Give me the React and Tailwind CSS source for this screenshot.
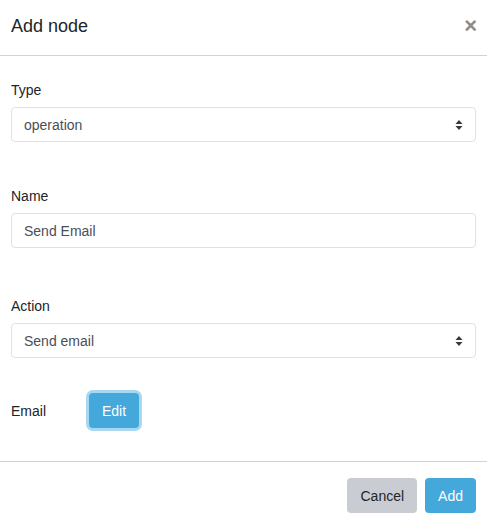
const font = { fontFamily: '"Liberation Sans", Arial, sans-serif' }

function SelectArrows() {
  return (
    <svg width="8" height="12" viewBox="0 0 8 12" className="shrink-0">
      <path d="M4 1 L7.5 5 H0.5 Z" fill="#343a40" />
      <path d="M4 11 L7.5 7 H0.5 Z" fill="#343a40" />
    </svg>
  )
}

function Field({ label, children, className = '' }) {
  return (
    <div className={className}>
      <div className="text-[14px] leading-[21px] text-[#212529] pt-[2px] mb-[6px]">{label}</div>
      {children}
    </div>
  )
}

function SelectBox({ value }) {
  return (
    <div className="h-[35px] border border-[#dee2e6] rounded-[4px] px-[12px] flex items-center justify-between text-[14px] text-[#495057] bg-white">
      <span className="mt-[2px]">{value}</span>
      <SelectArrows />
    </div>
  )
}

export default function App() {
  return (
    <div className="w-[487px] h-[518px] bg-white flex flex-col" style={font}>
      {/* Header */}
      <div className="h-[56px] px-[11px] flex items-center justify-between border-b border-[#cfd2d6]">
        <h2 className="text-[18px] text-[#212529] font-normal mt-[-2px]">Add node</h2>
        <span className="text-[22px] leading-none font-bold text-[#8a8a8a] mr-[-1px] mt-[-4px]">×</span>
      </div>

      {/* Body */}
      <div className="px-[11px] pt-[22px]">
        <Field label="Type">
          <SelectBox value="operation" />
        </Field>

        <Field label="Name" className="mt-[42px]">
          <div className="h-[35px] border border-[#dee2e6] rounded-[4px] px-[12px] flex items-center text-[14px] text-[#495057]">
            <span className="mt-[2px]">Send Email</span>
          </div>
        </Field>

        <Field label="Action" className="mt-[46px]">
          <SelectBox value="Send email" />
        </Field>

        <div className="mt-[35px] flex items-center h-[35px]">
          <div className="w-[78px] text-[14px] text-[#212529] pt-[2px]">Email</div>
          <button className="h-[35px] px-[13px] pt-[2px] rounded-[4px] bg-[#45a8da] text-white text-[14px] ring-[3px] ring-[#a7d8f1]">
            Edit
          </button>
        </div>
      </div>

      {/* Footer */}
      <div className="mt-[33px] border-t border-[#cfd2d6] px-[11px] pt-[16px] flex justify-end gap-[8px]">
        <button className="h-[35px] px-[13px] pt-[2px] rounded-[4px] bg-[#c9cdd3] text-[#212529] text-[14px]">
          Cancel
        </button>
        <button className="h-[35px] px-[13px] pt-[2px] rounded-[4px] bg-[#45a8da] text-white text-[14px]">
          Add
        </button>
      </div>
    </div>
  )
}
